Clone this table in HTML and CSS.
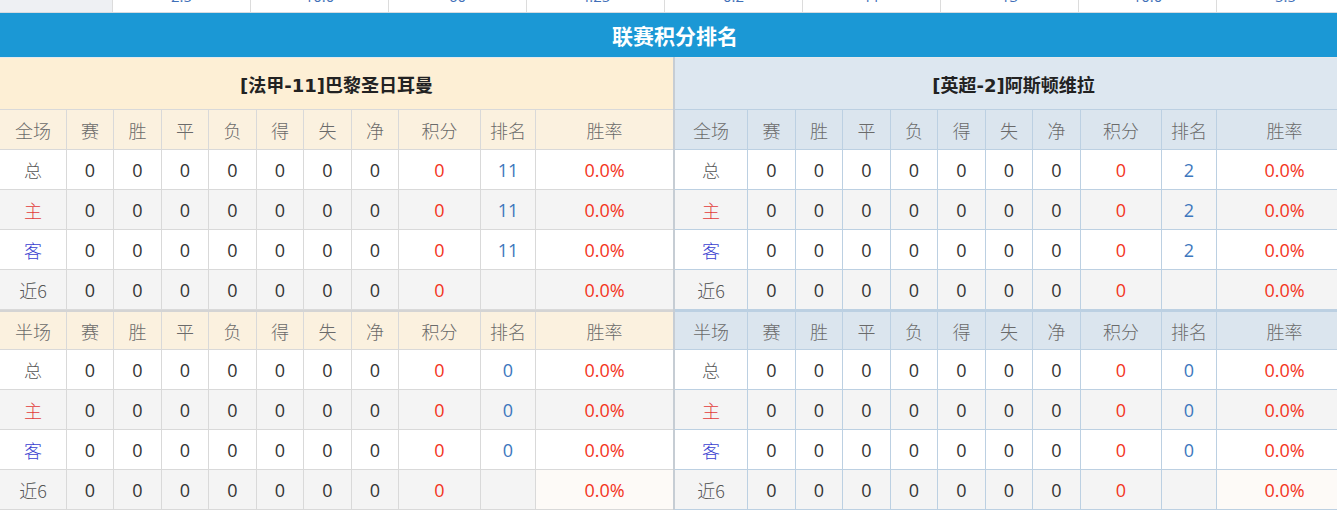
FILE: index.html
```html
<!DOCTYPE html>
<html lang="zh">
<head>
<meta charset="utf-8">
<title>联赛积分排名</title>
<link rel="stylesheet" href="styles.css">
</head>
<body>
<div class="page">
  <div class="strip">
    <div class="sc first"></div>
    <div class="sc"><span>2.5</span></div>
    <div class="sc"><span>10.0</span></div>
    <div class="sc"><span>60</span></div>
    <div class="sc"><span>4.25</span></div>
    <div class="sc"><span>0.2</span></div>
    <div class="sc"><span>11</span></div>
    <div class="sc"><span>13</span></div>
    <div class="sc"><span>10.0</span></div>
    <div class="sc"><span>5.5</span></div>
  </div>
  <div class="title">联赛积分排名</div>
  <div class="halves">
    <section class="half home">
      <div class="team"><b>[法甲-11]巴黎圣日耳曼</b></div>
      <div class="row head"><div>全场</div><div>赛</div><div>胜</div><div>平</div><div>负</div><div>得</div><div>失</div><div>净</div><div>积分</div><div>排名</div><div>胜率</div></div>
      <div class="row"><div class="k z">总</div><div>0</div><div>0</div><div>0</div><div>0</div><div>0</div><div>0</div><div>0</div><div class="r">0</div><div class="b">11</div><div class="r">0.0%</div></div>
      <div class="row alt"><div class="k zh">主</div><div>0</div><div>0</div><div>0</div><div>0</div><div>0</div><div>0</div><div>0</div><div class="r">0</div><div class="b">11</div><div class="r">0.0%</div></div>
      <div class="row"><div class="k ke">客</div><div>0</div><div>0</div><div>0</div><div>0</div><div>0</div><div>0</div><div>0</div><div class="r">0</div><div class="b">11</div><div class="r">0.0%</div></div>
      <div class="row alt"><div class="k z">近6</div><div>0</div><div>0</div><div>0</div><div>0</div><div>0</div><div>0</div><div>0</div><div class="r">0</div><div class="b"></div><div class="r">0.0%</div></div>
      <div class="row head sec"><div>半场</div><div>赛</div><div>胜</div><div>平</div><div>负</div><div>得</div><div>失</div><div>净</div><div>积分</div><div>排名</div><div>胜率</div></div>
      <div class="row"><div class="k z">总</div><div>0</div><div>0</div><div>0</div><div>0</div><div>0</div><div>0</div><div>0</div><div class="r">0</div><div class="b">0</div><div class="r">0.0%</div></div>
      <div class="row alt"><div class="k zh">主</div><div>0</div><div>0</div><div>0</div><div>0</div><div>0</div><div>0</div><div>0</div><div class="r">0</div><div class="b">0</div><div class="r">0.0%</div></div>
      <div class="row"><div class="k ke">客</div><div>0</div><div>0</div><div>0</div><div>0</div><div>0</div><div>0</div><div>0</div><div class="r">0</div><div class="b">0</div><div class="r">0.0%</div></div>
      <div class="row alt"><div class="k z">近6</div><div>0</div><div>0</div><div>0</div><div>0</div><div>0</div><div>0</div><div>0</div><div class="r">0</div><div class="b"></div><div class="r light">0.0%</div></div>
    </section>
    <section class="half away">
      <div class="team"><b>[英超-2]阿斯顿维拉</b></div>
      <div class="row head"><div>全场</div><div>赛</div><div>胜</div><div>平</div><div>负</div><div>得</div><div>失</div><div>净</div><div>积分</div><div>排名</div><div>胜率</div></div>
      <div class="row"><div class="k z">总</div><div>0</div><div>0</div><div>0</div><div>0</div><div>0</div><div>0</div><div>0</div><div class="r">0</div><div class="b">2</div><div class="r">0.0%</div></div>
      <div class="row alt"><div class="k zh">主</div><div>0</div><div>0</div><div>0</div><div>0</div><div>0</div><div>0</div><div>0</div><div class="r">0</div><div class="b">2</div><div class="r">0.0%</div></div>
      <div class="row"><div class="k ke">客</div><div>0</div><div>0</div><div>0</div><div>0</div><div>0</div><div>0</div><div>0</div><div class="r">0</div><div class="b">2</div><div class="r">0.0%</div></div>
      <div class="row alt"><div class="k z">近6</div><div>0</div><div>0</div><div>0</div><div>0</div><div>0</div><div>0</div><div>0</div><div class="r">0</div><div class="b"></div><div class="r">0.0%</div></div>
      <div class="row head sec"><div>半场</div><div>赛</div><div>胜</div><div>平</div><div>负</div><div>得</div><div>失</div><div>净</div><div>积分</div><div>排名</div><div>胜率</div></div>
      <div class="row"><div class="k z">总</div><div>0</div><div>0</div><div>0</div><div>0</div><div>0</div><div>0</div><div>0</div><div class="r">0</div><div class="b">0</div><div class="r">0.0%</div></div>
      <div class="row alt"><div class="k zh">主</div><div>0</div><div>0</div><div>0</div><div>0</div><div>0</div><div>0</div><div>0</div><div class="r">0</div><div class="b">0</div><div class="r">0.0%</div></div>
      <div class="row"><div class="k ke">客</div><div>0</div><div>0</div><div>0</div><div>0</div><div>0</div><div>0</div><div>0</div><div class="r">0</div><div class="b">0</div><div class="r">0.0%</div></div>
      <div class="row alt"><div class="k z">近6</div><div>0</div><div>0</div><div>0</div><div>0</div><div>0</div><div>0</div><div>0</div><div class="r">0</div><div class="b"></div><div class="r light">0.0%</div></div>
    </section>
  </div>
</div>
</body>
</html>
```
FILE: styles.css
```css
* { box-sizing: border-box; }
html, body { margin: 0; padding: 0; overflow: hidden; background: #fff; }
body { font-family: "Open Sans", "Noto Sans CJK SC", sans-serif; color: #333; }
.page { width: 1350px; }

.strip {
  display: grid;
  grid-template-columns: 113px repeat(9, 138px);
  height: 13px;
  border-bottom: 1px solid #d6dbe0;
  overflow: hidden;
}
.sc {
  border-right: 1px solid #dcdcdc;
  height: 12px;
  overflow: hidden;
  text-align: center;
  color: #3f6fb8;
  font-size: 15px;
  line-height: 20px;
}
.sc span { display: block; margin-top: -14px; }
.sc.first { background: #eef0f3; }

.title {
  height: 44px;
  background: #1b98d5;
  color: #fff;
  font-family: "Noto Sans CJK SC", sans-serif;
  font-weight: 700;
  font-size: 21px;
  display: flex;
  align-items: center;
  justify-content: center;
}

.halves { display: flex; }
.half { flex: none; }
.home {
  width: 675px;
  border-right: 2px solid #c6cdd4;
  --cols: 67px 47px 48px 47px 48px 47px 48px 47px 82px 55px 137px;
  --line: #d9d9d9;
}
.away {
  width: 677px;
  --cols: 73px 48px 47px 48px 47px 48px 47px 48px 81px 55px 135px;
  --line: #bcd0e2;
}

.team {
  height: 53px;
  border-top: 1px solid #e6e9ec;
  border-bottom: 1px solid var(--line);
  display: flex;
  align-items: center;
  justify-content: center;
  font-family: "DejaVu Sans", "Noto Sans CJK SC", sans-serif;
  font-size: 18px;
  color: #222;
}
.home .team { background: #fdefd5; }
.away .team { background: #dde7f0; }

.row {
  display: grid;
  grid-template-columns: var(--cols);
  height: 40px;
  border-bottom: 1px solid var(--line);
}
.row > div {
  border-right: 1px solid var(--line);
  display: flex;
  align-items: center;
  justify-content: center;
  font-size: 18px;
}
.row > div:last-child { border-right: none; }
.row.alt { background: #f4f4f4; }
.row.head > div {
  font-family: "Noto Sans CJK SC", sans-serif;
  font-weight: 300;
  color: #6a6a6a;
  font-size: 18px;
}
.home .row.head { background: #fbf1df; }
.away .row.head { background: #dbe5ee; }
.row.sec { border-top: 2px solid #d4d4d4; height: 40px; }
.away .row.sec { border-top-color: #bcd0e2; }

.k { font-family: "Noto Sans CJK SC", sans-serif; font-weight: 300; }
.k.z { color: #555; }
.k.zh { color: #e23b3b; }
.k.ke { color: #3a3fd0; }
.r { color: #f3341c; }
.b { color: #3d77bd; }
.light { background: #fdfaf7; }
```
